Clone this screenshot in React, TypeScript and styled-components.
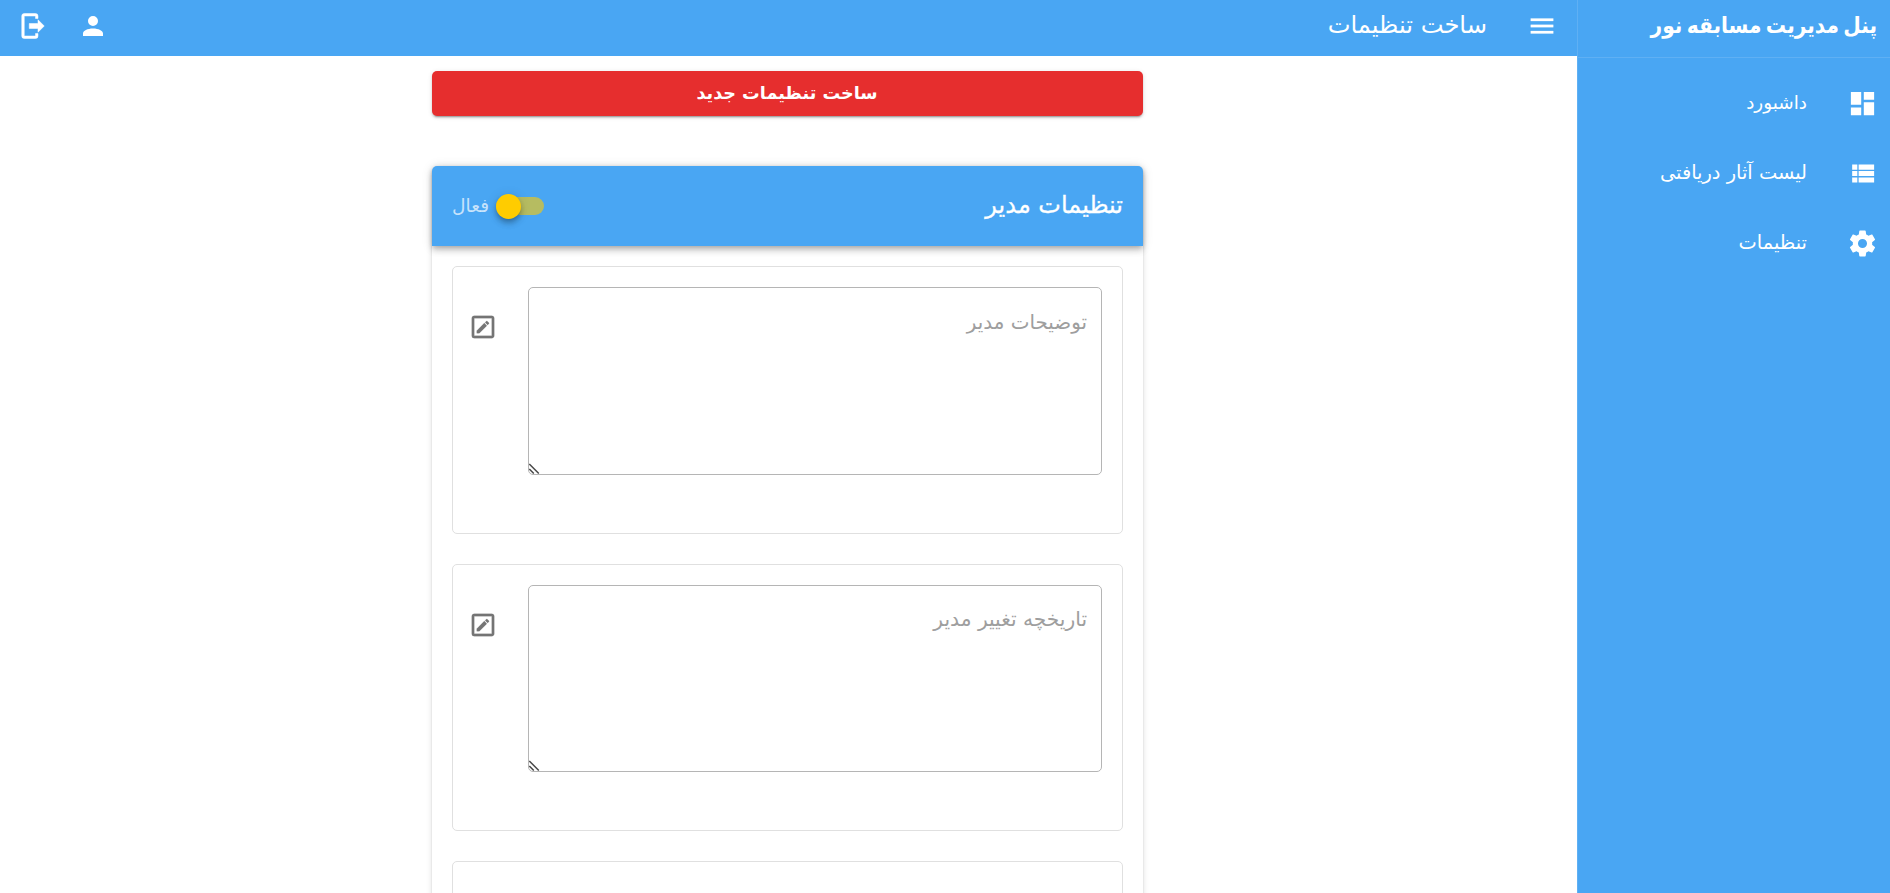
import React from "react";
import styled, { createGlobalStyle } from "styled-components";

const GlobalStyle = createGlobalStyle`
  *, *::before, *::after { box-sizing: border-box; }
  body { margin: 0; background: #fff; overflow: hidden; font-family: "DejaVu Sans", sans-serif; }
`;

const BLUE = "#49a6f3";

const Shell = styled.div`
  direction: rtl;
  display: flex;
  height: 100vh;
  overflow: hidden;
`;

const Sidebar = styled.aside`
  flex: none;
  width: 313px;
  background: ${BLUE};
  color: #fff;
  border-left: 1px solid rgba(255, 255, 255, 0.12);
`;

const Brand = styled.div`
  height: 58px;
  padding: 0 13px 8px 0;
  display: flex;
  align-items: center;
  word-spacing: -2.7px;
  border-bottom: 1px solid rgba(255, 255, 255, 0.12);
`;

const Label = styled.span<{ $size: number; $bold?: boolean; $condensed?: boolean }>`
  font-family: ${(p) =>
    p.$condensed ? '"DejaVu Sans Condensed", "DejaVu Sans", sans-serif' : "inherit"};
  font-stretch: ${(p) => (p.$condensed ? "condensed" : "normal")};
  font-size: ${(p) => p.$size}px;
  font-weight: ${(p) => (p.$bold ? 700 : 400)};
  line-height: 30px;
  white-space: nowrap;
`;

const NavItem = styled.a`
  height: 70px;
  padding-right: 12.5px;
  display: flex;
  align-items: center;
  gap: 39.5px;
`;

const NavText = styled.div`
  padding-bottom: 1px;
`;

const NavList = styled.nav`
  padding-top: 10px;
`;

const Glyph = styled.svg<{ $size: number; $stroke: number }>`
  flex: none;
  width: ${(p) => p.$size}px;
  height: ${(p) => p.$size}px;
  fill: currentColor;
  stroke: currentColor;
  stroke-width: ${(p) => p.$stroke};
`;

const Main = styled.main`
  flex: 1;
  min-width: 0;
`;

const AppBar = styled.header`
  height: 56px;
  padding: 0 20px 5px 18px;
  display: flex;
  align-items: center;
  background: ${BLUE};
  color: #fff;
`;

const BarTitle = styled.div`
  margin-right: 40px;
  padding-bottom: 1px;
  flex: 1;
`;

const BarActions = styled.div`
  display: flex;
  gap: 30px;
`;

const Content = styled.div`
  width: 711px;
  margin: 15px 434px 0 0;
`;

const CreateButton = styled.button`
  display: flex;
  align-items: center;
  justify-content: center;
  width: 100%;
  height: 45px;
  padding: 0 1px 2px 0;
  border: 0;
  border-radius: 5px;
  background: #e62e2e;
  color: #fff;
  font-family: inherit;
  box-shadow: 0 3px 1px -2px rgba(0, 0, 0, 0.2), 0 2px 2px rgba(0, 0, 0, 0.14),
    0 1px 5px rgba(0, 0, 0, 0.12);
`;

const Card = styled.section`
  margin-top: 50px;
  height: 900px;
  border-radius: 5px;
  background: #fff;
  box-shadow: 0 3px 1px -2px rgba(0, 0, 0, 0.2), 0 2px 2px rgba(0, 0, 0, 0.14),
    0 1px 6px rgba(0, 0, 0, 0.12);
`;

const CardHeader = styled.header`
  height: 80px;
  padding: 0 20px;
  display: flex;
  align-items: center;
  justify-content: space-between;
  border-radius: 5px 5px 0 0;
  background: ${BLUE};
  color: #fff;
  box-shadow: 0 2px 5px -1px rgba(0, 0, 0, 0.2), 0 5px 6px rgba(0, 0, 0, 0.14),
    0 1px 12px rgba(0, 0, 0, 0.12);
`;

const CardTitle = styled.h2`
  margin: 0;
  padding-bottom: 2px;
  font-size: 24px;
  font-weight: 400;
  line-height: 30px;
  -webkit-text-stroke: 0.3px currentColor;
`;

const Toggle = styled.div`
  display: flex;
  align-items: center;
  gap: 7px;
  color: rgba(255, 255, 255, 0.7);
`;

const Track = styled.div`
  width: 48px;
  height: 18px;
  border-radius: 9px;
  background: rgba(255, 204, 0, 0.6);
  display: flex;
  align-items: center;
  justify-content: flex-end;
`;

const Thumb = styled.div`
  width: 25px;
  height: 25px;
  flex: none;
  border-radius: 50%;
  background: #fc0;
  box-shadow: 0 3px 5px -1px rgba(0, 0, 0, 0.2), 0 5px 6px rgba(0, 0, 0, 0.14),
    0 1px 12px rgba(0, 0, 0, 0.12);
`;

const Fields = styled.div`
  padding: 20px;
  display: flex;
  flex-direction: column;
  gap: 30px;
`;

const FieldBox = styled.div<{ $height: number }>`
  height: ${(p) => p.$height}px;
  padding: 20px;
  display: flex;
  justify-content: space-between;
  align-items: flex-start;
  border: 1px solid #e0e0e0;
  border-radius: 5px;
`;

const Field = styled.div`
  position: relative;
  width: 574px;
`;

const FieldLabel = styled.label<{ $top: number }>`
  position: absolute;
  top: ${(p) => p.$top}px;
  right: 15px;
  display: flex;
  color: #9e9e9e;
`;

const Area = styled.textarea<{ $height: number }>`
  display: block;
  width: 100%;
  height: ${(p) => p.$height}px;
  padding: 20px 15px;
  border: 1px solid #b5b5b5;
  border-radius: 5px;
  background: transparent;
  resize: none;
  outline: 0;
`;

const Grip = styled.svg`
  position: absolute;
  left: 1px;
  bottom: 1px;
  width: 11px;
  height: 11px;
  fill: none;
  stroke: #4a4a4a;
  stroke-width: 1.5;
`;

const EditButton = styled.div`
  margin-top: 25px;
  margin-left: -5px;
  display: flex;
  color: #757575;
`;

const paths = {
  dashboard: "M13,3V9H21V3M13,21H21V11H13M3,21H11V15H3M3,13H11V3H3V13Z",
  list: "M9,5V9H21V5M9,19H21V15H9M9,14H21V10H9M4,9H8V5H4M4,19H8V15H4M4,14H8V10H4V14Z",
  cog: "M12,15.5A3.5,3.5 0 0,1 8.5,12A3.5,3.5 0 0,1 12,8.5A3.5,3.5 0 0,1 15.5,12A3.5,3.5 0 0,1 12,15.5M19.43,12.97C19.47,12.65 19.5,12.33 19.5,12C19.5,11.67 19.47,11.34 19.43,11L21.54,9.37C21.73,9.22 21.78,8.95 21.66,8.73L19.66,5.27C19.54,5.05 19.27,4.96 19.05,5.05L16.56,6.05C16.04,5.66 15.5,5.32 14.87,5.07L14.5,2.42C14.46,2.18 14.25,2 14,2H10C9.75,2 9.54,2.18 9.5,2.42L9.13,5.07C8.5,5.32 7.96,5.66 7.44,6.05L4.95,5.05C4.73,4.96 4.46,5.05 4.34,5.27L2.34,8.73C2.21,8.95 2.27,9.22 2.46,9.37L4.57,11C4.53,11.34 4.5,11.67 4.5,12C4.5,12.33 4.53,12.65 4.57,12.97L2.46,14.63C2.27,14.78 2.21,15.05 2.34,15.27L4.34,18.73C4.46,18.95 4.73,19.03 4.95,18.95L7.44,17.94C7.96,18.34 8.5,18.68 9.13,18.93L9.5,21.58C9.54,21.82 9.75,22 10,22H14C14.25,22 14.46,21.82 14.5,21.58L14.87,18.93C15.5,18.67 16.04,18.34 16.56,17.94L19.05,18.95C19.27,19.03 19.54,18.95 19.66,18.73L21.66,15.27C21.78,15.05 21.73,14.78 21.54,14.63L19.43,12.97Z",
  menu: "M3,6H21V8H3V6M3,11H21V13H3V11M3,16H21V18H3V16Z",
  account:
    "M12,4A4,4 0 0,1 16,8A4,4 0 0,1 12,12A4,4 0 0,1 8,8A4,4 0 0,1 12,4M12,14C16.42,14 20,15.79 20,18V20H4V18C4,15.79 7.58,14 12,14Z",
  logout:
    "M16,17V14H9V10H16V7L21,12L16,17M14,2A2,2 0 0,1 16,4V6H14V4H5V20H14V18H16V20A2,2 0 0,1 14,22H5A2,2 0 0,1 3,20V4A2,2 0 0,1 5,2H14Z",
  edit: "M19,19V5H5V19H19M19,3A2,2 0 0,1 21,5V19C21,20.11 20.1,21 19,21H5A2,2 0 0,1 3,19V5A2,2 0 0,1 5,3H19M16.7,9.35L15.7,10.35L13.65,8.3L14.65,7.3C14.86,7.08 15.21,7.08 15.42,7.3L16.7,8.58C16.92,8.79 16.92,9.14 16.7,9.35M7,14.94L13.06,8.88L15.12,10.94L9.06,17H7V14.94Z",
};

type IconProps = { name: keyof typeof paths; size?: number; stroke?: number };

const Icon = ({ name, size = 30, stroke = 0 }: IconProps) => (
  <Glyph viewBox="0 0 24 24" $size={size} $stroke={stroke} aria-hidden="true">
    <path d={paths[name]} />
  </Glyph>
);

const nav: { icon: keyof typeof paths; text: string; size: number }[] = [
  { icon: "dashboard", text: "داشبورد", size: 18.4 },
  { icon: "list", text: "لیست آثار دریافتی", size: 19.4 },
  { icon: "cog", text: "تنظیمات", size: 19.4 },
];

const fields = [
  { text: "توضیحات مدیر", box: 268, area: 188, top: 21, size: 19.9 },
  { text: "تاریخچه تغییر مدیر", box: 267, area: 187, top: 19, size: 20.2 },
  { text: "", box: 268, area: 0, top: 0, size: 20 },
];

export default function App() {
  return (
    <Shell lang="fa">
      <GlobalStyle />
      <Sidebar>
        <Brand>
          <Label $size={22.4} $bold $condensed>
            پنل مدیریت مسابقه نور
          </Label>
        </Brand>
        <NavList>
          {nav.map((n) => (
            <NavItem key={n.icon}>
              <Icon name={n.icon} size={31} />
              <NavText>
                <Label $size={n.size}>{n.text}</Label>
              </NavText>
            </NavItem>
          ))}
        </NavList>
      </Sidebar>
      <Main>
        <AppBar>
          <Icon name="menu" stroke={0.2} />
          <BarTitle>
            <Label $size={24.2}>ساخت تنظیمات</Label>
          </BarTitle>
          <BarActions>
            <Icon name="account" />
            <Icon name="logout" stroke={0.4} />
          </BarActions>
        </AppBar>
        <Content>
          <CreateButton>
            <Label $size={17.6} $bold>
              ساخت تنظیمات جدید
            </Label>
          </CreateButton>
          <Card>
            <CardHeader>
              <CardTitle>تنظیمات مدیر</CardTitle>
              <Toggle>
                <Track>
                  <Thumb />
                </Track>
                <Label $size={18.6}>فعال</Label>
              </Toggle>
            </CardHeader>
            <Fields>
              {fields.map((f, i) => (
                <FieldBox key={i} $height={f.box}>
                  {f.text && (
                    <>
                      <Field>
                        <Area id={`field-${i}`} $height={f.area} />
                        <FieldLabel htmlFor={`field-${i}`} $top={f.top}>
                          <Label $size={f.size}>{f.text}</Label>
                        </FieldLabel>
                        <Grip viewBox="0 0 11 11" aria-hidden="true">
                          <path d="M0.3,1L9.8,10.5M0.3,6L4.8,10.5" />
                        </Grip>
                      </Field>
                      <EditButton>
                        <Icon name="edit" stroke={0.15} />
                      </EditButton>
                    </>
                  )}
                </FieldBox>
              ))}
            </Fields>
          </Card>
        </Content>
      </Main>
    </Shell>
  );
}
